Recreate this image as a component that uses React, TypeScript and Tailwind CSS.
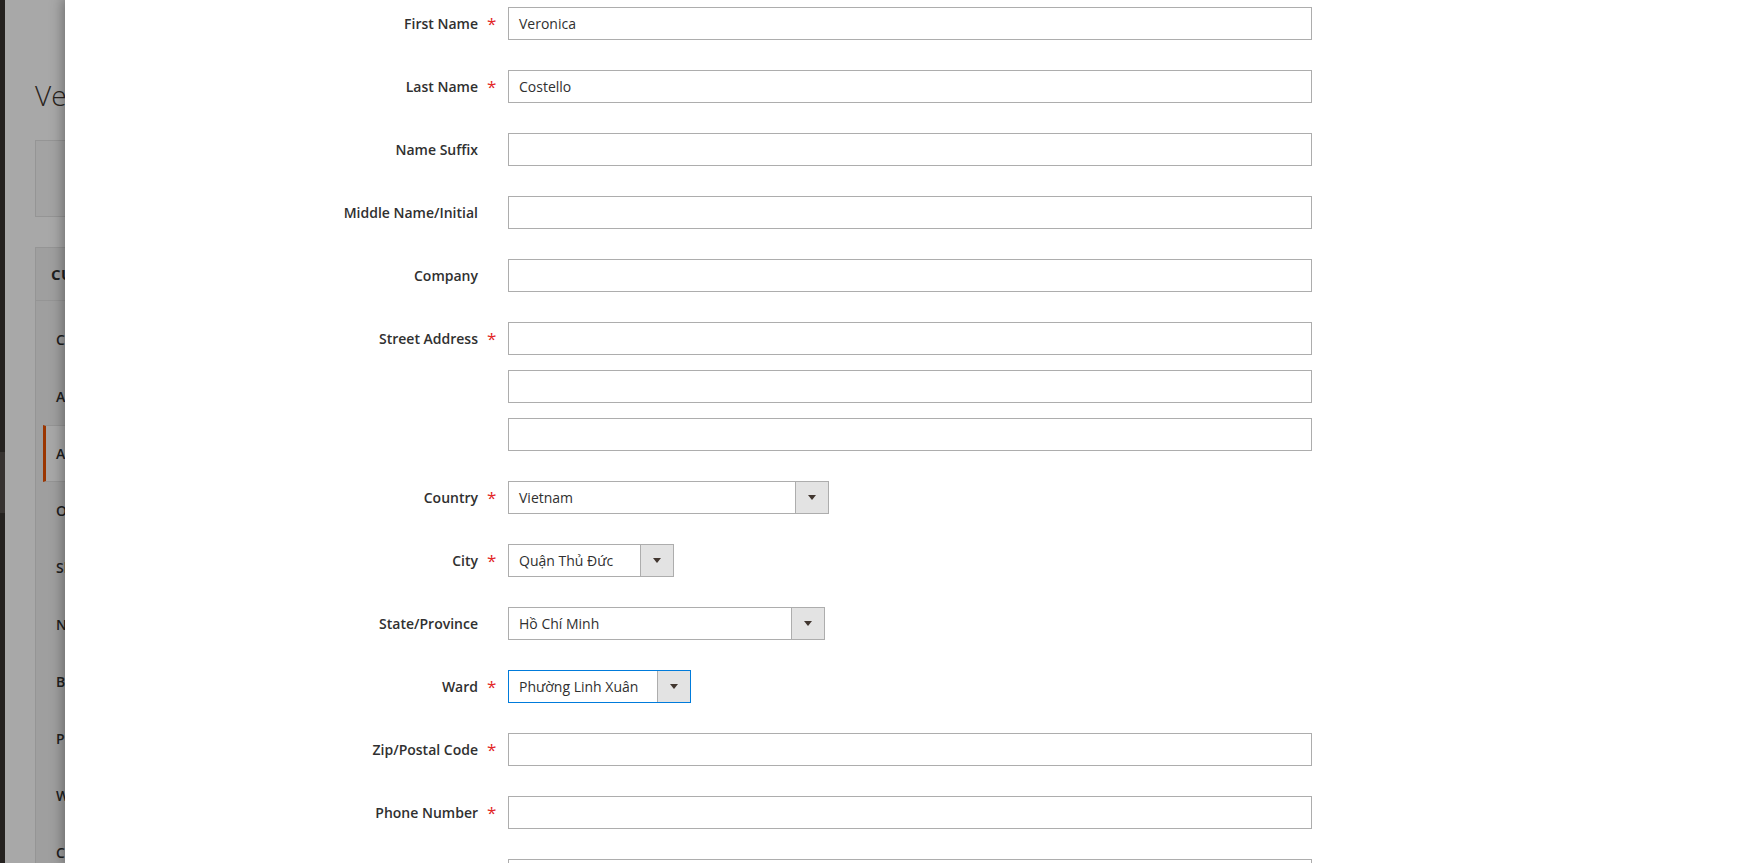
const tabs = [
  "Customer View",
  "Account Information",
  "Addresses",
  "Orders",
  "Shopping cart",
  "Newsletter",
  "Billing Agreements",
  "Product Reviews",
  "Wish List",
  "Customer's Activities",
];

type Field =
  | { kind: "text"; label: string; req?: boolean; value?: string; lines?: number }
  | { kind: "select"; label: string; req?: boolean; value: string; width: string; focus?: boolean };

// last row sits below the fold, only its input's top edge shows
const fields: Field[] = [
  { kind: "text", label: "First Name", req: true, value: "Veronica" },
  { kind: "text", label: "Last Name", req: true, value: "Costello" },
  { kind: "text", label: "Name Suffix" },
  { kind: "text", label: "Middle Name/Initial" },
  { kind: "text", label: "Company" },
  { kind: "text", label: "Street Address", req: true, lines: 3 },
  { kind: "select", label: "Country", req: true, value: "Vietnam", width: "w-[321px]" },
  { kind: "select", label: "City", req: true, value: "Quận Thủ Đức", width: "w-[166px]" },
  { kind: "select", label: "State/Province", value: "Hồ Chí Minh", width: "w-[317px]" },
  { kind: "select", label: "Ward", req: true, value: "Phường Linh Xuân", width: "w-[183px]", focus: true },
  { kind: "text", label: "Zip/Postal Code", req: true },
  { kind: "text", label: "Phone Number", req: true },
  { kind: "text", label: "" },
];

function TextInput({ value }: { value?: string }) {
  return (
    <div className="h-[33px] w-[804px] border border-[#adadad] bg-white px-[10px] flex items-center text-[14px] text-[#303030]">
      {value}
    </div>
  );
}

function Select({ value, width, focus }: { value: string; width: string; focus?: boolean }) {
  return (
    <div
      className={`h-[33px] ${width} flex border bg-white ${focus ? "border-[#007bdb]" : "border-[#adadad]"}`}
    >
      <div className="flex-1 px-[10px] flex items-center text-[14px] text-[#303030] whitespace-nowrap">{value}</div>
      <div className="w-[33px] border-l border-[#adadad] bg-[#e3e3e3] flex items-center justify-center">
        <span className="w-0 h-0 border-x-4 border-x-transparent border-t-[5px] border-t-[#41362f]" />
      </div>
    </div>
  );
}

function Row({ f }: { f: Field }) {
  return (
    <div className="flex items-start mb-[30px]">
      <div className="w-[413px] h-[33px] flex items-center justify-end text-[14px] font-semibold text-[#303030]">
        {f.label}
      </div>
      <div className="w-[30px] h-[33px] flex items-center pl-[9px] text-[17px] text-[#e22626]">
        {f.req ? "*" : ""}
      </div>
      {f.kind === "text" ? (
        <div className="flex flex-col gap-[15px]">
          {Array.from({ length: f.lines ?? 1 }).map((_, i) => (
            <TextInput key={i} value={i === 0 ? f.value : undefined} />
          ))}
        </div>
      ) : (
        <Select value={f.value} width={f.width} focus={f.focus} />
      )}
    </div>
  );
}

export default function App() {
  return (
    <div className="relative h-screen w-full overflow-hidden bg-white font-['Open_Sans','Noto_Sans',sans-serif]">
      {/* page behind the modal */}
      <div className="flex h-full">
        <div className="w-[5px] bg-[#373330] flex flex-col">
          <div className="mt-[452px] h-[61px] bg-[#524d49]" />
        </div>
        <div className="flex-1 pl-[30px]">
          <h1 className="mt-[76px] text-[28px] leading-[38px] font-light text-[#41362f] whitespace-nowrap">
            Veronica Costello
          </h1>
          <div className="mt-[26px] h-[77px] border border-[#e3e3e3] bg-[#f8f8f8]" />
          <div className="mt-[30px] w-[300px] h-[700px] border border-[#e3e3e3] bg-[#f1f1f1]">
            <div className="h-[53px] border-b border-[#e3e3e3] pl-[15px] flex items-center text-[15px] font-bold uppercase tracking-[0.025em] text-[#303030] whitespace-nowrap">
              Customer Information
            </div>
            <div className="mt-[10px]">
              {tabs.map((t) => (
                <div
                  key={t}
                  className={`ml-[7px] h-[57px] border-l-[3px] pl-[10px] flex items-center text-[14px] font-semibold text-[#303030] whitespace-nowrap ${
                    t === "Addresses"
                      ? "border-[#eb5202] bg-white border-y border-y-[#e3e3e3]"
                      : "border-transparent"
                  }`}
                >
                  {t}
                </div>
              ))}
            </div>
          </div>
        </div>
      </div>

      {/* overlay */}
      <div className="absolute inset-0 bg-black/[0.34]" />

      {/* slide-in modal */}
      <div className="absolute top-0 bottom-0 left-[65px] right-0 bg-white shadow-[0_0_12px_2px_rgba(0,0,0,0.35)] overflow-hidden">
        <div className="pt-[7px]">
          {fields.map((f, i) => (
            <Row key={i} f={f} />
          ))}
        </div>
      </div>
    </div>
  );
}
